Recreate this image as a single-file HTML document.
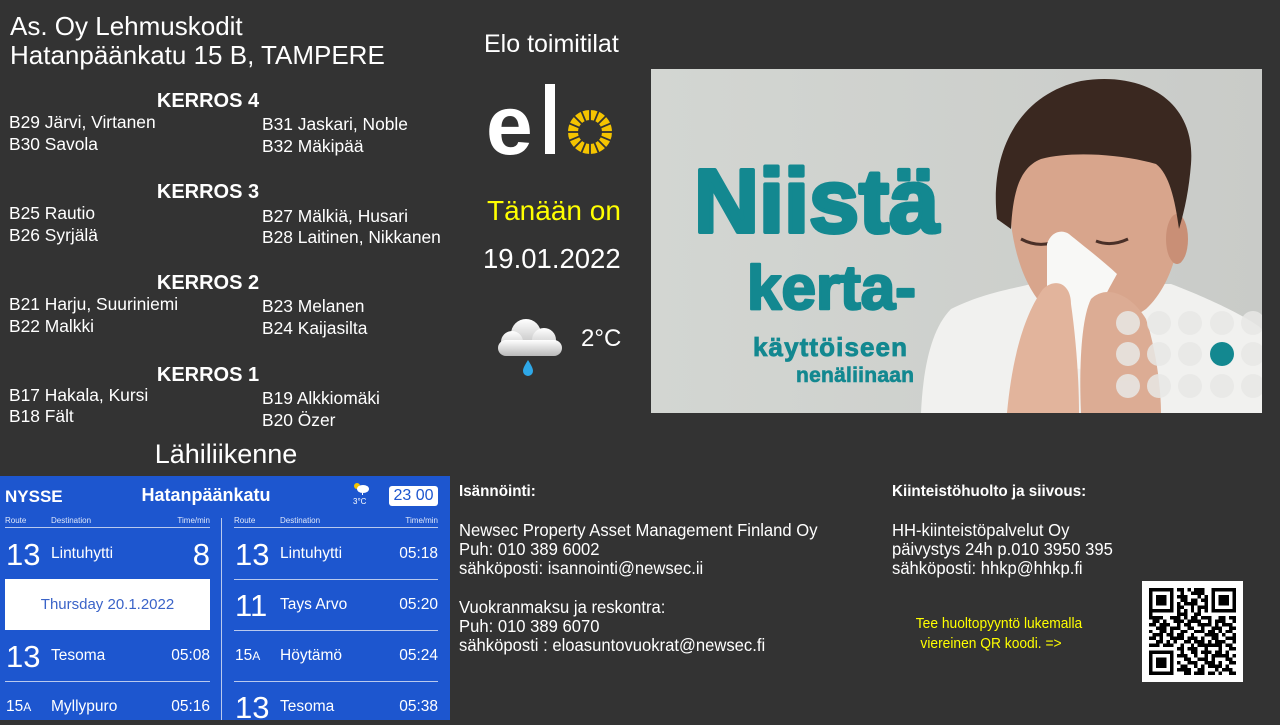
<!DOCTYPE html>
<html><head><meta charset="utf-8"><style>
*{margin:0;padding:0;box-sizing:border-box}
body{width:1280px;height:720px;background:#333;overflow:hidden;position:relative;font-family:"Liberation Sans",sans-serif;color:#fff}
.t{position:absolute;white-space:nowrap;line-height:1}
.r{font-size:17.4px}
.k{font-size:20px;font-weight:bold;left:208px;transform:translateX(-50%)}
.n{font-size:17.5px;transform:scaleX(0.95);transform-origin:0 0}
#bus{position:absolute;left:0;top:476px;width:450px;height:244px;background:#1d56cf}
.hl{position:absolute;height:1px;background:#b9c9ee}
.sm{font-size:8px;color:#dfe7fa}
.big{font-size:31px}
.d{font-size:15.5px}
</style></head><body>
<div class="t" style="left:10px;top:13px;font-size:26px">As. Oy Lehmuskodit</div>
<div class="t" style="left:10px;top:42px;font-size:26px">Hatanpäänkatu 15 B, TAMPERE</div>

<div class="t k" style="top:91px">KERROS 4</div>
<div class="t r" style="left:9px;top:114px">B29 Järvi, Virtanen</div>
<div class="t r" style="left:9px;top:136px">B30 Savola</div>
<div class="t r" style="left:262px;top:116px">B31 Jaskari, Noble</div>
<div class="t r" style="left:262px;top:138px">B32 Mäkipää</div>

<div class="t k" style="top:182px">KERROS 3</div>
<div class="t r" style="left:9px;top:205px">B25 Rautio</div>
<div class="t r" style="left:9px;top:227px">B26 Syrjälä</div>
<div class="t r" style="left:262px;top:208px">B27 Mälkiä, Husari</div>
<div class="t r" style="left:262px;top:229px">B28 Laitinen, Nikkanen</div>

<div class="t k" style="top:273px">KERROS 2</div>
<div class="t r" style="left:9px;top:296px">B21 Harju, Suuriniemi</div>
<div class="t r" style="left:9px;top:318px">B22 Malkki</div>
<div class="t r" style="left:262px;top:298px">B23 Melanen</div>
<div class="t r" style="left:262px;top:320px">B24 Kaijasilta</div>

<div class="t k" style="top:365px">KERROS 1</div>
<div class="t r" style="left:9px;top:387px">B17 Hakala, Kursi</div>
<div class="t r" style="left:9px;top:408px">B18 Fält</div>
<div class="t r" style="left:262px;top:390px">B19 Alkkiomäki</div>
<div class="t r" style="left:262px;top:412px">B20 Özer</div>

<div class="t" style="left:226px;transform:translateX(-50%);top:441px;font-size:27px">Lähiliikenne</div>

<!-- middle column -->
<div class="t" style="left:484px;top:32px;font-size:25px">Elo toimitilat</div>
<svg style="position:absolute;left:486px;top:82px" width="135" height="75" viewBox="0 0 135 75">
 <text x="0" y="72" font-family="Liberation Sans" font-size="84" fill="#fff" font-weight="bold" letter-spacing="-2">e</text>
 <rect x="59" y="2" width="10" height="70" fill="#fff"/>
 <g transform="translate(104,50)" fill="#f5c400">
  <circle r="22"/>
  <circle r="12" fill="#333"/>
 </g>
 <g transform="translate(104,50)" stroke="#333" stroke-width="1.8">
  <line x1="0" y1="-23" x2="0" y2="-11" transform="rotate(0)"/><line x1="0" y1="-23" x2="0" y2="-11" transform="rotate(22.5)"/><line x1="0" y1="-23" x2="0" y2="-11" transform="rotate(45)"/><line x1="0" y1="-23" x2="0" y2="-11" transform="rotate(67.5)"/><line x1="0" y1="-23" x2="0" y2="-11" transform="rotate(90)"/><line x1="0" y1="-23" x2="0" y2="-11" transform="rotate(112.5)"/><line x1="0" y1="-23" x2="0" y2="-11" transform="rotate(135)"/><line x1="0" y1="-23" x2="0" y2="-11" transform="rotate(157.5)"/><line x1="0" y1="-23" x2="0" y2="-11" transform="rotate(180)"/><line x1="0" y1="-23" x2="0" y2="-11" transform="rotate(202.5)"/><line x1="0" y1="-23" x2="0" y2="-11" transform="rotate(225)"/><line x1="0" y1="-23" x2="0" y2="-11" transform="rotate(247.5)"/><line x1="0" y1="-23" x2="0" y2="-11" transform="rotate(270)"/><line x1="0" y1="-23" x2="0" y2="-11" transform="rotate(292.5)"/><line x1="0" y1="-23" x2="0" y2="-11" transform="rotate(315)"/><line x1="0" y1="-23" x2="0" y2="-11" transform="rotate(337.5)"/>
 </g>
</svg>
<div class="t" style="left:487px;top:197px;font-size:28px;color:#ffff00">Tänään on</div>
<div class="t" style="left:483px;top:245px;font-size:27.5px">19.01.2022</div>
<svg style="position:absolute;left:496px;top:314px" width="70" height="66" viewBox="0 0 70 66">
 <defs><linearGradient id="cg" x1="0" y1="0" x2="0" y2="1"><stop offset="0" stop-color="#fff"/><stop offset="1" stop-color="#b9b9b9"/></linearGradient></defs>
 <g fill="url(#cg)">
  <circle cx="30" cy="20" r="15"/><circle cx="16" cy="28" r="11"/><circle cx="48" cy="26" r="12"/>
  <rect x="2" y="26" width="64" height="16" rx="8"/>
 </g>
 <path d="M32 46 C29 51 27 54 27 57 a5 5 0 0 0 10 0 C37 54 35 51 32 46z" fill="#2ea8e8"/>
</svg>
<div class="t" style="left:581px;top:327px;font-size:24px">2°C</div>

<!-- ad image -->
<svg style="position:absolute;left:651px;top:69px" width="611" height="344" viewBox="0 0 611 344">
 <defs><linearGradient id="bg" x1="0" y1="0" x2="1" y2="0"><stop offset="0" stop-color="#d3d6d2"/><stop offset="1" stop-color="#c9cbc8"/></linearGradient></defs>
 <rect width="611" height="344" fill="url(#bg)"/>
 <!-- shirt -->
 <path d="M270 344 C272 300 280 260 300 240 C330 225 360 220 380 215 L520 215 C560 230 600 250 611 260 L611 344Z" fill="#f1f1ef"/>
 <!-- face -->
 <path d="M358 120 C360 80 400 70 445 72 C495 72 528 90 530 130 C532 170 522 215 495 240 C470 258 420 258 395 240 C370 215 358 170 358 120Z" fill="#d8a58c"/>
 <ellipse cx="526" cy="170" rx="11" ry="25" fill="#c98f76"/>
 <!-- hair -->
 <path d="M346 150 C338 80 370 25 430 12 C490 2 545 30 540 95 C538 120 534 140 528 160 C524 130 518 105 505 95 C470 85 420 82 390 90 C370 98 362 120 360 160 Z" fill="#3a2820"/>
 <!-- eyes -->
 <path d="M370 170 q15 8 30 4 M445 172 q15 6 32 -2" stroke="#4a3028" stroke-width="3" fill="none"/>
 <!-- tissue -->
 <path d="M396 175 C400 163 410 160 418 165 C430 175 450 190 466 205 C455 225 440 250 430 300 C415 300 400 280 396 250 Z" fill="#f8f8f6"/>
 <!-- hands -->
 <path d="M356 344 C360 300 370 250 392 220 C405 208 420 215 420 235 C425 270 428 310 428 344Z" fill="#e2b49c"/>
 <path d="M430 344 C428 300 430 250 440 230 C455 215 480 225 495 250 C505 280 510 320 510 344Z" fill="#dcac94"/>
 <!-- text -->
 <text x="43" y="163" font-family="Liberation Sans" font-weight="bold" font-size="90" fill="#138890" stroke="#138890" stroke-width="4" stroke-linejoin="round">Niistä</text>
 <text x="96" y="240" font-family="Liberation Sans" font-weight="bold" font-size="62" fill="#138890" stroke="#138890" stroke-width="2.5" stroke-linejoin="round">kerta-</text>
 <text x="102" y="287" font-family="Liberation Sans" font-weight="bold" font-size="26" fill="#138890" stroke="#138890" stroke-width="0.8" textLength="154">käyttöiseen</text>
 <text x="145" y="313" font-family="Liberation Sans" font-weight="bold" font-size="21" fill="#138890" stroke="#138890" stroke-width="0.6" textLength="118">nenäliinaan</text>
 <g fill="#e8e8e6" opacity="0.85">
  <circle cx="477" cy="254" r="12"/><circle cx="508" cy="254" r="12"/><circle cx="539" cy="254" r="12"/><circle cx="571" cy="254" r="12"/><circle cx="602" cy="254" r="12"/>
  <circle cx="477" cy="285" r="12"/><circle cx="508" cy="285" r="12"/><circle cx="539" cy="285" r="12"/><circle cx="602" cy="285" r="12"/>
  <circle cx="477" cy="317" r="12"/><circle cx="508" cy="317" r="12"/><circle cx="539" cy="317" r="12"/><circle cx="571" cy="317" r="12"/><circle cx="602" cy="317" r="12"/>
 </g>
 <circle cx="571" cy="285" r="12" fill="#138890"/>
</svg>

<!-- bus panel -->
<div id="bus">
 <div class="t" style="left:5px;top:12px;font-size:17px;font-weight:bold">NYSSE</div>
 <div class="t" style="left:206px;transform:translateX(-50%);top:10px;font-size:18px;font-weight:bold">Hatanpäänkatu</div>
 <svg style="position:absolute;left:352px;top:5px" width="18" height="14" viewBox="0 0 18 14"><circle cx="5" cy="5" r="3" fill="#f5c400"/><ellipse cx="11" cy="8" rx="6" ry="4" fill="#fff"/><rect x="10" y="12" width="1" height="2" fill="#fff"/></svg>
 <div class="t" style="left:353px;top:22px;font-size:8px">3°C</div>
 <div style="position:absolute;left:389px;top:10px;width:49px;height:20px;background:#fff;border-radius:3px;color:#1d56cf;font-size:16px;text-align:center;line-height:20px">23 00</div>

 <div class="t sm" style="left:5px;top:41px">Route</div>
 <div class="t sm" style="left:51px;top:41px">Destination</div>
 <div class="t sm" style="left:210px;top:41px;transform:translateX(-100%)">Time/min</div>
 <div class="t sm" style="left:234px;top:41px">Route</div>
 <div class="t sm" style="left:280px;top:41px">Destination</div>
 <div class="t sm" style="left:438px;top:41px;transform:translateX(-100%)">Time/min</div>
 <div class="hl" style="left:5px;width:205px;top:51px"></div>
 <div class="hl" style="left:234px;width:204px;top:51px"></div>
 <div style="position:absolute;left:221px;top:42px;width:1px;height:202px;background:#b9c9ee"></div>

 <div class="t big" style="left:6px;top:63px">13</div>
 <div class="t d" style="left:51px;top:70px">Lintuhytti</div>
 <div class="t big" style="left:210px;top:63px;transform:translateX(-100%)">8</div>
 <div style="position:absolute;left:5px;top:103px;width:205px;height:51px;background:#fff;color:#3a63c8;font-size:15px;text-align:center;line-height:51px">Thursday 20.1.2022</div>
 <div class="t big" style="left:6px;top:165px">13</div>
 <div class="t d" style="left:51px;top:172px">Tesoma</div>
 <div class="t d" style="left:210px;top:172px;transform:translateX(-100%)">05:08</div>
 <div class="hl" style="left:5px;width:205px;top:205px"></div>
 <div class="t d" style="left:6px;top:223px">15<span style="font-size:12px">A</span></div>
 <div class="t d" style="left:51px;top:223px">Myllypuro</div>
 <div class="t d" style="left:210px;top:223px;transform:translateX(-100%)">05:16</div>

 <div class="t big" style="left:235px;top:63px">13</div>
 <div class="t d" style="left:280px;top:70px">Lintuhytti</div>
 <div class="t d" style="left:438px;top:70px;transform:translateX(-100%)">05:18</div>
 <div class="hl" style="left:234px;width:204px;top:103px"></div>
 <div class="t big" style="left:235px;top:114px">11</div>
 <div class="t d" style="left:280px;top:121px">Tays Arvo</div>
 <div class="t d" style="left:438px;top:121px;transform:translateX(-100%)">05:20</div>
 <div class="hl" style="left:234px;width:204px;top:154px"></div>
 <div class="t d" style="left:235px;top:172px">15<span style="font-size:12px">A</span></div>
 <div class="t d" style="left:280px;top:172px">Höytämö</div>
 <div class="t d" style="left:438px;top:172px;transform:translateX(-100%)">05:24</div>
 <div class="hl" style="left:234px;width:204px;top:205px"></div>
 <div class="t big" style="left:235px;top:216px">13</div>
 <div class="t d" style="left:280px;top:223px">Tesoma</div>
 <div class="t d" style="left:438px;top:223px;transform:translateX(-100%)">05:38</div>
</div>

<!-- info -->
<div class="t n" style="left:459px;top:484px;font-weight:bold;font-size:16px">Isännöinti:</div>
<div class="t n" style="left:459px;top:522px">Newsec Property Asset Management Finland Oy</div>
<div class="t n" style="left:459px;top:541px">Puh: 010 389 6002</div>
<div class="t n" style="left:459px;top:560px">sähköposti: isannointi@newsec.ii</div>
<div class="t n" style="left:459px;top:599px">Vuokranmaksu ja reskontra:</div>
<div class="t n" style="left:459px;top:618px">Puh: 010 389 6070</div>
<div class="t n" style="left:459px;top:637px">sähköposti : eloasuntovuokrat@newsec.fi</div>

<div class="t n" style="left:892px;top:484px;font-weight:bold;font-size:16px">Kiinteistöhuolto ja siivous:</div>
<div class="t n" style="left:892px;top:522px">HH-kiinteistöpalvelut Oy</div>
<div class="t n" style="left:892px;top:541px">päivystys 24h p.010 3950 395</div>
<div class="t n" style="left:892px;top:560px">sähköposti: hhkp@hhkp.fi</div>
<div class="t" style="left:999px;transform:translateX(-50%) scaleX(0.92);top:616px;font-size:15px;color:#ffff00">Tee huoltopyyntö lukemalla</div>
<div class="t" style="left:991px;transform:translateX(-50%) scaleX(0.92);top:636px;font-size:15px;color:#ffff00">viereinen QR koodi. =&gt;</div>

<svg style="position:absolute;left:1142px;top:581px" width="101" height="101" viewBox="-2 -2 29 29" shape-rendering="crispEdges">
 <rect x="-2" y="-2" width="29" height="29" fill="#fff"/>
 <g fill="#000">
  <path d="M0 0h7v7h-7zM1 1v5h5v-5zM2 2h3v3h-3z" fill-rule="evenodd"/>
  <path d="M18 0h7v7h-7zM19 1v5h5v-5zM20 2h3v3h-3z" fill-rule="evenodd"/>
  <path d="M0 18h7v7h-7zM1 19v5h5v-5zM2 20h3v3h-3z" fill-rule="evenodd"/>
 </g>
 <g stroke="#000" stroke-width="1" fill="none">
  <path d="M8 0.5h2M11 0.5h1M13 0.5h3M9 1.5h1M12 1.5h4M8 2.5h3M14 2.5h1M16 2.5h1M9 3.5h2M12 3.5h2M15 3.5h2M8 4.5h1M10 4.5h4M16 4.5h1M8 5.5h2M12 5.5h1M14 5.5h3M8 6.5h1M10 6.5h1M12 6.5h1M14 6.5h1M16 6.5h1"/>
  <path d="M0 7.5h1M8 7.5h3M13 7.5h2M0 8.5h4M6 8.5h3M10 8.5h1M12 8.5h2M15 8.5h3M20 8.5h2M23 8.5h2M1 9.5h2M4 9.5h1M7 9.5h3M11 9.5h4M17 9.5h1M19 9.5h3M24 9.5h1M0 10.5h2M3 10.5h3M8 10.5h1M10 10.5h2M14 10.5h4M19 10.5h1M21 10.5h3M2 11.5h3M6 11.5h3M11 11.5h2M15 11.5h1M18 11.5h3M23 11.5h2"/>
  <path d="M0 12.5h1M3 12.5h2M6 12.5h1M9 12.5h2M13 12.5h3M17 12.5h2M20 12.5h1M22 12.5h2M1 13.5h3M5 13.5h2M8 13.5h2M12 13.5h1M16 13.5h4M21 13.5h1M24 13.5h1M0 14.5h2M3 14.5h1M6 14.5h4M11 14.5h3M15 14.5h1M18 14.5h2M22 14.5h3M2 15.5h2M5 15.5h1M7 15.5h1M10 15.5h2M13 15.5h3M17 15.5h1M19 15.5h3M24 15.5h1M0 16.5h3M4 16.5h3M9 16.5h1M12 16.5h1M14 16.5h2M16 16.5h5M22 16.5h2"/>
  <path d="M8 17.5h2M11 17.5h3M16 17.5h1M20 17.5h1M23 17.5h2M9 18.5h1M12 18.5h2M15 18.5h3M19 18.5h2M22 18.5h1M8 19.5h3M13 19.5h1M16 19.5h1M18 19.5h5M24 19.5h1M10 20.5h2M14 20.5h3M18 20.5h1M22 20.5h2M8 21.5h1M11 21.5h3M16 21.5h3M20 21.5h1M23 21.5h2M9 22.5h2M13 22.5h1M15 22.5h1M17 22.5h4M22 22.5h1M8 23.5h4M14 23.5h2M19 23.5h1M21 23.5h3M10 24.5h2M13 24.5h3M17 24.5h2M20 24.5h1M23 24.5h2"/>
 </g>
</svg>
</body></html>
